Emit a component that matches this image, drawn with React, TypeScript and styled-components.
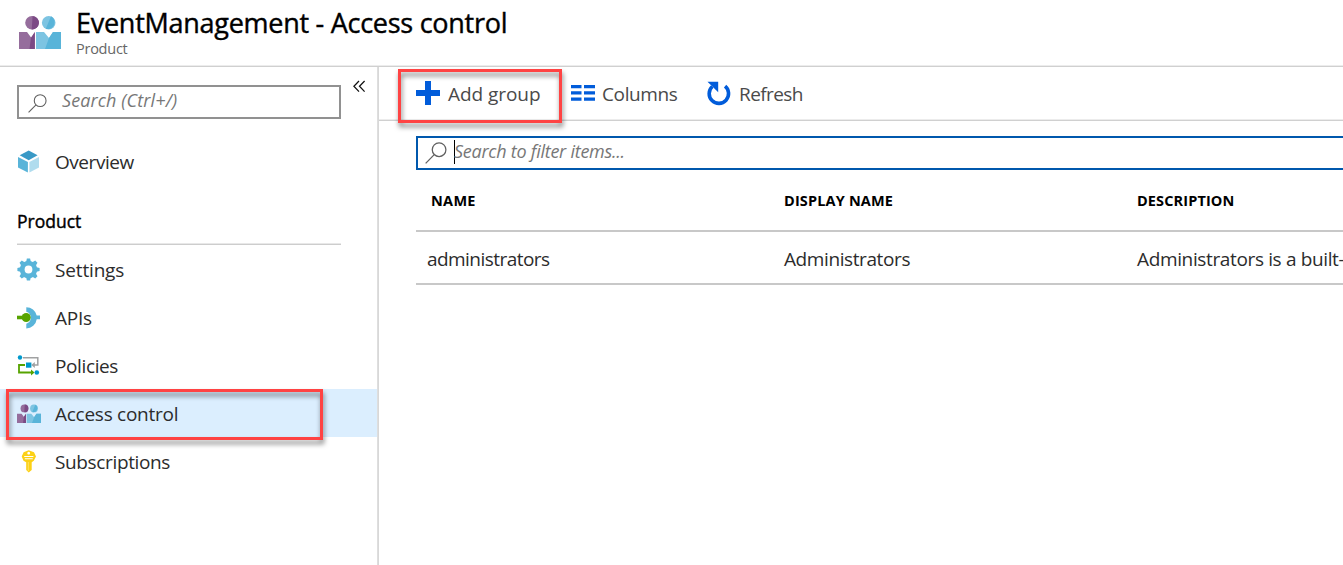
import React from "react";
import styled, { createGlobalStyle } from "styled-components";

const Global = createGlobalStyle`
  * { box-sizing: border-box; }
  html, body { margin: 0; height: 100%; overflow: hidden; background: #fff; }
  body { font-family: "Open Sans", "Noto Sans", sans-serif; color: #222; }
`;

const Page = styled.div`
  position: relative;
  width: 100%;
  height: 565px;
  overflow: hidden;
  display: flex;
  flex-direction: column;
`;

const Label = styled.span<{ $size: number; $spacing?: number; $weight?: number; $color?: string; $italic?: boolean; $stroke?: number }>`
  font-size: ${p => p.$size}px;
  letter-spacing: ${p => p.$spacing ?? 0}px;
  font-weight: ${p => p.$weight ?? 400};
  font-style: ${p => (p.$italic ? "italic" : "normal")};
  color: ${p => p.$color ?? "#2c2c2c"};
  -webkit-text-stroke: ${p => p.$stroke ?? 0}px currentColor;
  line-height: 24px;
  white-space: nowrap;
`;

const Header = styled.header`
  flex: none;
  height: 67px;
  display: flex;
  padding: 7px 0 0 19px;
  border-bottom: 1px solid #d0d0d0;
  box-shadow: inset 0 -1px 0 #ececec;
`;

const HeaderIcon = styled.div`
  width: 57px;
  padding-top: 8px;
`;

const Titles = styled.div`
  display: flex;
  flex-direction: column;
`;

const Title = styled.h1`
  margin: 0;
  font-size: 27px;
  line-height: 32px;
  font-weight: 400;
  letter-spacing: -0.27px;
  -webkit-text-stroke: 0.4px currentColor;
  color: #000;
  white-space: nowrap;
`;

const Subtitle = styled.span`
  font-size: 14.5px;
  line-height: 20px;
  letter-spacing: -0.25px;
  color: #666;
`;

const Body = styled.div`
  flex: 1;
  display: flex;
  min-height: 0;
`;

const Sidebar = styled.nav`
  flex: none;
  width: 379px;
  border-right: 1px solid #d8d8d8;
  box-shadow: inset -1px 0 0 #dedede;
  display: flex;
  flex-direction: column;
`;

const SideTop = styled.div`
  display: flex;
  padding: 18px 0 0 17px;
  margin-bottom: 18px;
`;

const SideSearch = styled.div`
  width: 324px;
  height: 34px;
  border: 2px solid #919191;
  display: flex;
  align-items: center;
  padding: 0 0 4px 9px;
  gap: 15px;

  svg { margin-top: 6px; }
`;

const Collapse = styled.div`
  margin: -5px 0 0 12px;
  height: 14px;
  display: flex;
`;

const Item = styled.a<{ $selected?: boolean }>`
  flex: none;
  height: 48px;
  width: 377px;
  display: flex;
  align-items: center;
  padding: 2px 0 0 17px;
  gap: 14px;
  background: ${p => (p.$selected ? "#dbeefe" : "transparent")};
`;

const ItemIcon = styled.span`
  width: 24px;
  height: 24px;
  margin-top: -1px;
  display: flex;
  align-items: center;
`;

const Section = styled.div`
  margin: 0 0 0 17px;
  width: 324px;
  height: 60px;
  padding-top: 24px;
  border-bottom: 1px solid #cdcdcd;
  box-shadow: inset 0 -1px 0 #e8e8e8;
`;

const Main = styled.main`
  flex: 1;
  min-width: 0;
  display: flex;
  flex-direction: column;
`;

const Toolbar = styled.div`
  flex: none;
  height: 54px;
  padding-left: 37px;
  display: flex;
  align-items: center;
  border-bottom: 1px solid #d0d0d0;
  box-shadow: inset 0 -1px 0 #ececec;
`;

const Command = styled.button<{ $width: number; $gap: number }>`
  flex: none;
  width: ${p => p.$width}px;
  height: 52px;
  padding: 0;
  border: 0;
  background: none;
  font-family: inherit;
  display: flex;
  align-items: center;
  gap: ${p => p.$gap}px;

  svg { margin-top: -1px; }
`;

const Content = styled.section`
  padding: 15px 0 0 37px;
`;

const Filter = styled.div`
  height: 34px;
  border: 2px solid #0058ad;
  border-right: 0;
  display: flex;
  align-items: center;
  padding: 0 0 4px 7px;

  svg { margin-top: 3px; }
`;

const Caret = styled.span`
  width: 1px;
  height: 24px;
  margin: 2px -1px 0 7px;
  background: #000;
`;

const Row = styled.div<{ $height: number; $inset: number }>`
  height: ${p => p.$height}px;
  display: grid;
  grid-template-columns: ${p => 368 - p.$inset}px 353px 1fr;
  align-items: center;
  padding: 2px 0 0 ${p => p.$inset}px;
  border-bottom: 2px solid #c8c8c8;
  overflow: hidden;
`;

const Callout = styled.div<{ $x: number; $y: number; $w: number; $h: number }>`
  position: absolute;
  left: ${p => p.$x}px;
  top: ${p => p.$y}px;
  width: ${p => p.$w}px;
  height: ${p => p.$h}px;
  border: 3px solid #ff4343;
  filter: drop-shadow(1px 4px 2.5px rgba(0, 0, 0, 0.5));
  pointer-events: none;
`;

const People = ({ size }: { size: number }) => (
  <svg width={size} height={size * 34 / 42} viewBox="0 0 42 34">
    <circle cx="13" cy="7.700" r="6.800" fill="#956d9c" />
    <path d="M13.600.9a6.800 6.800 0 0 1-.9 13.600z" fill="#7c4a85" />
    <circle cx="29.700" cy="7.700" r="6.800" fill="#7dc4e2" />
    <path d="M32 1.300a6.800 6.800 0 0 1-5.200 12.500z" fill="#59b4d9" />
    <path d="M0 17h8l4.500 6 3.300-6v17H0z" fill="#956d9c" />
    <path d="M12 22.500 15.800 17V34H10.500z" fill="#7c4a85" />
    <path d="M17 17h8l5 6 4-6h8v17H17z" fill="#7dc4e2" />
    <path d="M30 23 34 17h8v17H26z" fill="#59b4d9" />
  </svg>
);

const Magnifier = ({ size }: { size: number }) => (
  <svg width={size} height={size} viewBox="0 0 20 20" fill="none" stroke="#606060" strokeWidth="1.150">
    <circle cx="12.800" cy="7" r="6.200" />
    <path d="M8.400 11.500.6 19.400" />
  </svg>
);

const Cube = () => (
  <svg width="24" height="24" viewBox="0 0 24 24">
    <path d="M11.700 .5 20.600 5.300 11.700 10.200 2.700 5.300z" fill="#3999c6" />
    <path d="M1 7 10.900 11.900V22.500L1 17.500z" fill="#59b4d9" />
    <path d="M22 7 12.400 11.900V22.500L22 17.500z" fill="#b0dcee" />
  </svg>
);

const Gear = () => (
  <svg width="24" height="24" viewBox="0 0 24 24">
    <g fill="#59b4d9">
      {[0, 45, 90, 135].map(a => (
        <path key={a} transform={`rotate(${a} 11.500 11.500)`} d="M9.900.4h3.200l1.200 5v12.200l-1.200 5H9.900l-1.200-5V5.400z" />
      ))}
      <circle cx="11.500" cy="11.500" r="8.700" />
    </g>
    <circle cx="11.500" cy="11.500" r="3.900" fill="#fff" />
  </svg>
);

const Api = () => (
  <svg width="24" height="24" viewBox="0 0 24 24">
    <path d="M9.300 1.200A10.500 10.500 0 0 1 19.700 9.500H23v3.800h-3.300A10.500 10.500 0 0 1 9.300 22.500V17.700A6.200 6.200 0 0 0 9.300 5.800z" fill="#59b4d9" />
    <circle cx="9.200" cy="11.500" r="4.500" fill="#57a300" />
    <path d="M0 9.700h7v3.600H0z" fill="#57a300" />
  </svg>
);

const Policy = () => (
  <svg width="24" height="24" viewBox="0 0 24 24" fill="none">
    <path d="M6 3.700h14.800V11H16" stroke="#a0a1a2" strokeWidth="1.500" />
    <path d="m17.800 8-3.500 3 3.500 3z" fill="#a0a1a2" />
    <path d="M8 11H2v7.500h14" stroke="#57a300" strokeWidth="1.800" />
    <path d="m14 15.600 3.500 2.900-3.500 2.900z" fill="#57a300" />
    <path d="M9 8.500h5.400v5.200H9z" fill="#0099cc" />
    <circle cx="3" cy="3.500" r="2.200" fill="#0099cc" />
    <circle cx="19.800" cy="18.500" r="2.300" fill="#0099cc" />
  </svg>
);

const Key = () => (
  <svg width="24" height="24" viewBox="0 0 24 24">
    <path fillRule="evenodd" d="M11.700.3 17 2.200 19 6.500 16.800 10.800 14.700 12.300V20L11.700 22.500 9.200 20V12.300L6.500 10.800 4.700 6.500 6.600 2.200zM11.700 1.800a1.400 1.400 0 1 0 .01 0zM7.200 6v.9h9.200V6zM7.800 8.300v.9h8V8.300z" fill="#fcd116" />
    <path d="M11.300 12v9" stroke="#fff" strokeOpacity=".45" strokeWidth=".8" />
  </svg>
);

const Plus = () => (
  <svg width="24" height="24" viewBox="0 0 24 24">
    <path d="M9 0h6v9h9v6h-9v9H9v-9H0V9h9z" fill="#015cda" />
  </svg>
);

const ColumnsIcon = () => (
  <svg width="24" height="16" viewBox="0 0 24 16" fill="#015cda">
    <path d="M0 0h10.500v3.200H0zM13 0h11v3.200H13zM0 6.300h10.500v3.200H0zM13 6.300h11v3.200H13zM0 12.600h10.500v3.200H0zM13 12.600h11v3.200H13z" />
  </svg>
);

const RefreshIcon = () => (
  <svg width="24" height="25" viewBox="0 0 24 25">
    <path d="M5.300 5.500a9.700 9.700 0 1 0 12.800-.3" fill="none" stroke="#015cda" strokeWidth="3.600" />
    <path d="M.5.800h10.700v10.400z" fill="#015cda" />
  </svg>
);

const Chevrons = () => (
  <svg width="13" height="13" viewBox="0 0 13 13" fill="none" stroke="#111" strokeWidth="1.250">
    <path d="M6 1 .9 6.300 6 11.600M11.600 1 6.500 6.300l5.100 5.300" />
  </svg>
);

const items = [
  { text: "Settings", icon: <Gear />, spacing: -0.16 },
  { text: "APIs", icon: <Api />, spacing: -0.25 },
  { text: "Policies", icon: <Policy />, spacing: -0.38 },
  { text: "Access control", icon: <People size={24} />, spacing: -0.26, selected: true },
  { text: "Subscriptions", icon: <Key />, spacing: -0.36 },
];

export default function App() {
  return (
    <Page>
      <Global />
      <Header>
        <HeaderIcon><People size={42} /></HeaderIcon>
        <Titles>
          <Title>EventManagement - Access control</Title>
          <Subtitle>Product</Subtitle>
        </Titles>
      </Header>
      <Body>
        <Sidebar>
          <SideTop>
            <SideSearch>
              <Magnifier size={19} />
              <Label $size={18} $spacing={0.12} $italic $color="#777">Search (Ctrl+/)</Label>
            </SideSearch>
            <Collapse><Chevrons /></Collapse>
          </SideTop>
          <Item>
            <ItemIcon><Cube /></ItemIcon>
            <Label $size={19} $spacing={-0.45}>Overview</Label>
          </Item>
          <Section><Label $size={17.5} $stroke={0.4} $color="#000">Product</Label></Section>
          {items.map(i => (
            <Item key={i.text} $selected={i.selected}>
              <ItemIcon>{i.icon}</ItemIcon>
              <Label $size={19} $spacing={i.spacing}>{i.text}</Label>
            </Item>
          ))}
        </Sidebar>
        <Main>
          <Toolbar>
            <Command $width={155} $gap={8}><Plus /><Label $size={19} $spacing={-0.06} $color="#4a4a4a">Add group</Label></Command>
            <Command $width={136} $gap={7}><ColumnsIcon /><Label $size={19} $spacing={-0.38} $color="#4a4a4a">Columns</Label></Command>
            <Command $width={100} $gap={8}><RefreshIcon /><Label $size={19} $spacing={-0.6} $color="#4a4a4a">Refresh</Label></Command>
          </Toolbar>
          <Content>
            <Filter>
              <Magnifier size={22} />
              <Caret />
              <Label $size={18} $spacing={-0.25} $italic $color="#777">Search to filter items...</Label>
            </Filter>
            <Row $height={62} $inset={15}>
              <Label $size={14.5} $spacing={0.3} $weight={700} $color="#000">NAME</Label>
              <Label $size={14.5} $spacing={0.16} $weight={700} $color="#000">DISPLAY NAME</Label>
              <Label $size={14.5} $spacing={0.12} $weight={700} $color="#000">DESCRIPTION</Label>
            </Row>
            <Row $height={53} $inset={11}>
              <Label $size={19} $spacing={-0.55}>administrators</Label>
              <Label $size={19} $spacing={-0.4}>Administrators</Label>
              <Label $size={19} $spacing={-0.36}>Administrators is a built-in</Label>
            </Row>
          </Content>
        </Main>
      </Body>
      <Callout $x={6} $y={389} $w={317} $h={51} />
      <Callout $x={398} $y={69} $w={164} $h={54} />
    </Page>
  );
}
